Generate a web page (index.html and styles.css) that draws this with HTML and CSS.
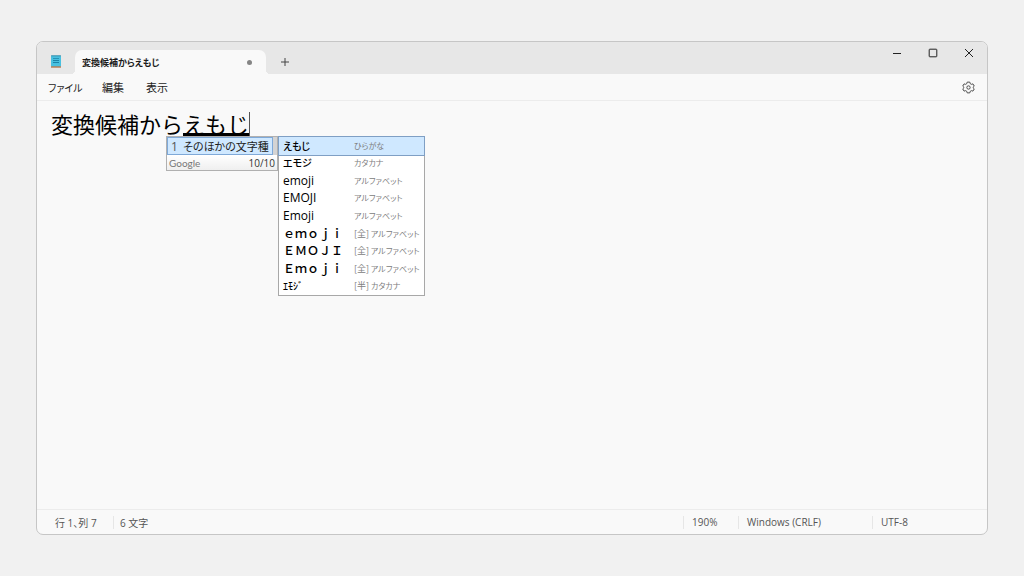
FILE: index.html
```html
<!DOCTYPE html>
<html lang="ja">
<head>
<meta charset="utf-8">
<meta name="viewport" content="width=device-width, initial-scale=1">
<title>変換候補からえもじ</title>
<link rel="stylesheet" href="styles.css">
</head>
<body>
<main class="window">
  <header class="titlebar">
    <svg class="app-icon" viewBox="0 0 12 14" aria-hidden="true">
      <rect x="1" y="1.500" width="10" height="11.500" rx="1" fill="#48c0e0"/>
      <path d="M2 1v1.500M4 1v1.500M6 1v1.500M8 1v1.500M10 1v1.500" stroke="#2c7f9b" stroke-width="1"/>
      <path d="M3 4.500h6" stroke="#2792b5"/>
      <path d="M3 6.500h6M3 8.500h6" stroke="#1b83a8" stroke-width="1.200"/>
      <path d="M1 13h10" stroke="#b87950" stroke-width="1.400"/>
    </svg>
    <div class="tab">
      <span class="tab-title">変換候補からえもじ</span>
      <span class="tab-dot"></span>
    </div>
    <button class="new-tab" aria-label="新しいタブ"><svg viewBox="0 0 10 10"><path d="M5 1v8M1 5h8"/></svg></button>
    <div class="controls">
      <button aria-label="最小化"><svg viewBox="0 0 10 10"><path d="M1 5.500h8"/></svg></button>
      <button aria-label="最大化"><svg viewBox="0 0 10 10"><rect x="1.200" y="1.200" width="7.600" height="7.600" rx=".6"/></svg></button>
      <button aria-label="閉じる"><svg viewBox="0 0 10 10"><path d="M1 1l8 8M9 1L1 9"/></svg></button>
    </div>
  </header>
  <nav class="menubar">
    <button class="file">ファイル</button>
    <button>編集</button>
    <button>表示</button>
    <button class="settings" aria-label="設定">
      <svg viewBox="0 0 14 14"><path d="M5.600 1.200h2.800l.5 1.700 1.200.7 1.700-.5 1.400 2.400-1.300 1.200v.6l1.300 1.200-1.400 2.400-1.700-.5-1.200.7-.5 1.700H5.600l-.5-1.700-1.200-.7-1.700.5L.8 8.500l1.300-1.200v-.6L.8 5.500l1.400-2.400 1.700.5 1.200-.7z"/><circle cx="7" cy="7" r="1.800"/></svg>
    </button>
  </nav>
  <section class="editor">
    <div class="line" role="textbox" aria-label="本文" tabindex="0">変換候補から<span class="composing">えもじ</span></div>
    <div class="ime">
      <div class="candidates">
        <div class="candidate-row"><span class="candidate"><span class="number">1</span><span class="kana">そのほかの文字種</span></span></div>
        <div class="candidate-footer"><span class="brand">Google</span><span>10/10</span></div>
      </div>
      <ul class="variants">
        <li class="selected"><span class="kana">えもじ</span><small>ひらがな</small></li>
        <li><span class="kana">エモジ</span><small>カタカナ</small></li>
        <li><span>emoji</span><small>アルファベット</small></li>
        <li><span>EMOJI</span><small>アルファベット</small></li>
        <li><span>Emoji</span><small>アルファベット</small></li>
        <li><span class="wide">ｅｍｏｊｉ</span><small><span class="form">[全]</span> アルファベット</small></li>
        <li><span class="wide">ＥＭＯＪＩ</span><small><span class="form">[全]</span> アルファベット</small></li>
        <li><span class="wide">Ｅｍｏｊｉ</span><small><span class="form">[全]</span> アルファベット</small></li>
        <li><span class="half">ｴﾓｼﾞ</span><small><span class="form">[半]</span> カタカナ</small></li>
      </ul>
    </div>
  </section>
  <footer class="statusbar">
    <span class="position">行 1、列 7</span>
    <span class="count">6 文字</span>
    <span class="zoom">190%</span>
    <span class="newline">Windows (CRLF)</span>
    <span class="encoding">UTF-8</span>
  </footer>
</main>
</body>
</html>
```

FILE: styles.css
```css
* { box-sizing: border-box; }

body {
  margin: 0;
  min-height: 100vh;
  padding: 41px 36px;
  display: flex;
  background: #f1f1f1;
  color: #1c1c1c;
  font-family: "Open Sans", "Noto Sans CJK JP", sans-serif;
  font-size: 12px;
  font-feature-settings: "palt";
}

button {
  border: 0;
  padding: 0;
  background: none;
  color: inherit;
  font: inherit;
  font-feature-settings: inherit;
  white-space: nowrap;
}

svg {
  display: block;
  fill: none;
  stroke: #444;
}

.window {
  flex: 1;
  display: flex;
  flex-direction: column;
  border: 1px solid #c6c6c6;
  border-radius: 7px;
  background: #f9f9f9;
}

.titlebar {
  height: 32px;
  display: flex;
  align-items: flex-end;
  background: #e7e7e7;
  border-radius: 6px 6px 0 0;
}

.app-icon {
  width: 12px;
  height: 14px;
  margin: 0 13px 6px;
  stroke: none;
}

.tab {
  position: relative;
  width: 191px;
  height: 24px;
  padding: 0 14px 0 7px;
  display: flex;
  align-items: center;
  justify-content: space-between;
  background: #f9f9f9;
  border-radius: 7px 7px 0 0;
}

.tab::before,
.tab::after {
  content: "";
  position: absolute;
  bottom: 0;
  width: 4px;
  height: 4px;
}

.tab::before {
  right: 100%;
  background: radial-gradient(circle at 0 0, #e7e7e7 4px, #f9f9f9 4px);
}

.tab::after {
  left: 100%;
  background: radial-gradient(circle at 100% 0, #e7e7e7 4px, #f9f9f9 4px);
}

.tab-title {
  font-family: "Noto Sans CJK JP", sans-serif;
  font-size: 9px;
  font-weight: 700;
}

.tab-dot {
  width: 5px;
  height: 5px;
  border-radius: 50%;
  background: #858585;
}

.new-tab {
  margin: 0 0 7px 14px;
}

.new-tab svg,
.controls svg {
  width: 10px;
  height: 10px;
}

.controls {
  align-self: flex-start;
  margin-left: auto;
  padding: 6px 13px;
  display: flex;
  gap: 26px;
}

.controls svg { stroke: #222; }

.menubar {
  height: 27px;
  padding: 0 12px 0 11px;
  display: flex;
  align-items: center;
  gap: 22px;
  border-bottom: 1px solid #ececec;
  font-family: "Noto Sans CJK JP", sans-serif;
  font-size: 11px;
}

.file {
  width: 32px;
  font-size: 10px;
  text-align: left;
}

.settings { margin-left: auto; }

.settings svg {
  width: 13px;
  height: 13px;
}

.editor {
  position: relative;
  flex: 1;
  padding: 11px 14px;
}

.line {
  width: max-content;
  border-right: 1px solid #555;
  color: #000;
  font-family: "Noto Sans CJK JP", sans-serif;
  font-size: 22px;
  line-height: 22px;
  font-feature-settings: normal;
  outline: 0;
}

.composing {
  display: inline-block;
  height: 24px;
  border-bottom: 3px solid #000;
  vertical-align: top;
}

.ime {
  position: absolute;
  top: 35px;
  left: 129px;
  display: flex;
  align-items: flex-start;
}

.candidates {
  width: 112px;
  border: 1px solid #b0b0b0;
  background: #fff;
}

.candidate-row {
  height: 18px;
  padding-right: 4px;
  background: #d4d4d4;
}

.candidate {
  height: 18px;
  padding-left: 3px;
  display: flex;
  align-items: center;
  border: 1px solid #7fa9d8;
  background: #cfe8ff;
  white-space: nowrap;
}

.number {
  flex: none;
  width: 12px;
  color: #555;
}

.candidate .kana { font-size: 11px; }

.candidate-footer {
  height: 15px;
  padding: 0 2px;
  display: flex;
  align-items: center;
  justify-content: space-between;
  background: linear-gradient(#fff, #efefef);
  color: #333;
  font-size: 10px;
}

.brand {
  color: #777;
  font-family: Lato, sans-serif;
  font-size: 10px;
}

.variants {
  width: 147px;
  height: 160px;
  margin: 0;
  padding: 0;
  display: grid;
  grid-template-columns: minmax(0, 1fr);
  grid-auto-rows: minmax(0, 1fr);
  border: 1px solid #a8a8a8;
  background: #fff;
  color: #000;
  list-style: none;
}

.variants li {
  padding: 0 4px;
  display: grid;
  grid-template-columns: 71px minmax(0, 1fr);
  align-items: center;
  line-height: 16px;
  white-space: nowrap;
}

.variants .selected {
  background: #cfe8ff;
  outline: 1px solid #7f9fc4;
}

.variants .kana {
  font-size: 10px;
  font-weight: 500;
}

.variants small {
  color: #808080;
  font-family: "Noto Sans CJK JP", sans-serif;
  font-size: 8px;
}

.form { font-size: 9px; }

.variants .wide {
  font-weight: 500;
  font-feature-settings: normal;
}

.variants .half {
  font-size: 10px;
  font-weight: 500;
  font-feature-settings: normal;
}

.statusbar {
  height: 25px;
  padding-left: 18px;
  display: flex;
  align-items: center;
  border-top: 1px solid #ececec;
  color: #555;
  font-size: 10px;
}

.statusbar span {
  height: 13px;
  display: flex;
  align-items: center;
}

.statusbar span + span {
  padding-left: 8px;
  border-left: 1px solid #e6e6e6;
}

.statusbar .count { padding-left: 6px; }

.position { width: 58px; }
.zoom {
  width: 55px;
  margin-left: auto;
}
.newline { width: 134px; }
.encoding { width: 115px; }
```
